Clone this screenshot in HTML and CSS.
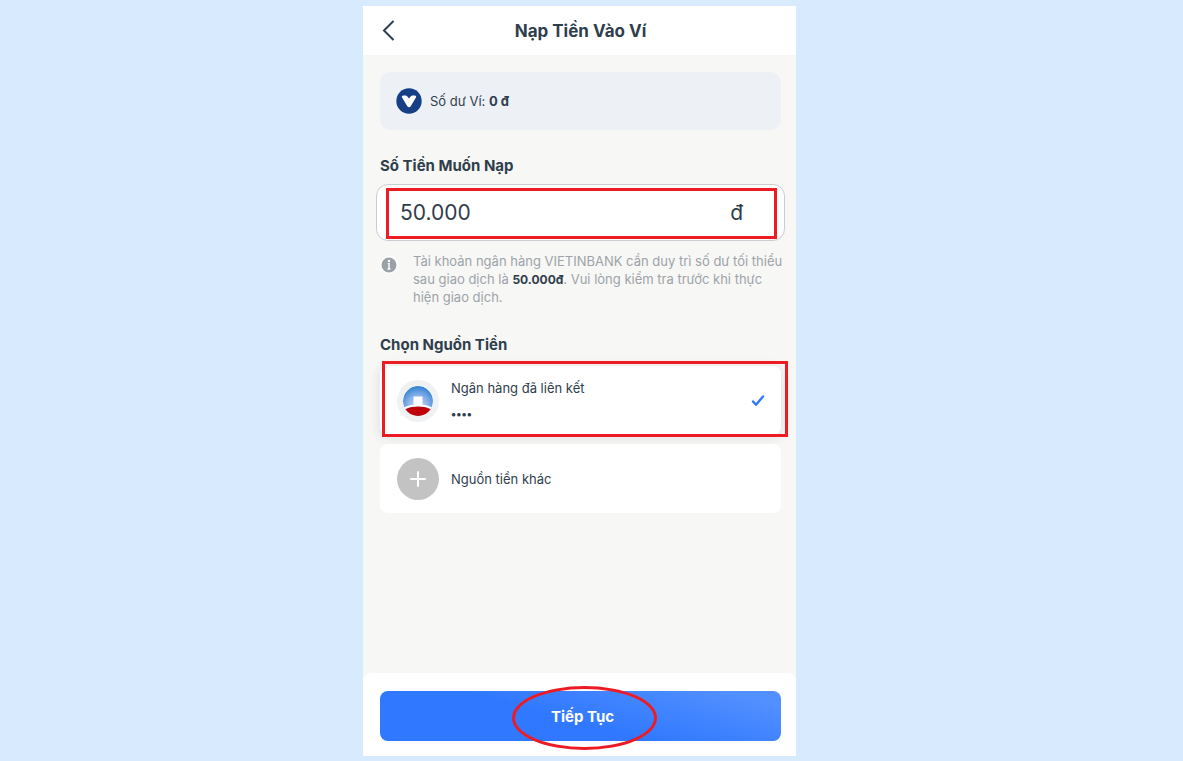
FILE: index.html
```html
<!DOCTYPE html>
<html lang="vi">
<head>
    <meta charset="UTF-8">
    <meta name="viewport" content="width=device-width, initial-scale=1.0">
    <title>Nạp Tiền Vào Ví</title>
    <link rel="stylesheet" href="styles.css">
</head>
<body>
    <form class="screen">
        <header class="header">
            <button type="button" class="back" aria-label="Quay lại">
                <svg width="14" height="22" viewBox="0 0 14 22"><path d="M12.5 1 3 10.5 12.5 20"/></svg>
            </button>
            <h1>Nạp Tiền Vào Ví</h1>
        </header>

        <main class="content">
            <div class="balance">
                <svg width="26" height="26" viewBox="0 0 26 26">
                    <circle cx="13" cy="13" r="12.7" fill="#173f86"/>
                    <path d="M7.4 7.4h2.2c.5 0 .9.2 1.3.6l2.1 2.4 2.1-2.4c.4-.4.8-.6 1.3-.6h2.2c1.4 0 2 1.1 1.3 2.2l-5.2 8.6c-.8 1.3-2.6 1.3-3.4 0L6.1 9.6c-.7-1.1-.1-2.2 1.3-2.2z" fill="#fff"/>
                </svg>
                <p>Số dư Ví: <b>0 đ</b></p>
            </div>

            <label class="section-title" for="amount">Số Tiền Muốn Nạp</label>
            <div class="amount">
                <input type="text" id="amount" inputmode="numeric" value="50.000">
                <span class="currency">đ</span>
                <div class="mark mark-amount"></div>
            </div>
            <div class="note">
                <svg width="18" height="18" viewBox="0 0 18 18">
                    <circle cx="9" cy="9" r="9" fill="#fff"/>
                    <circle cx="9" cy="9" r="7.5" fill="#9aa1a7"/>
                    <circle cx="9" cy="5" r="1.2" fill="#fff"/>
                    <path d="M7.8 7.6H9V13M7.6 13h2.8" fill="none" stroke="#fff" stroke-width="1.4"/>
                </svg>
                <p>Tài khoản ngân hàng VIETINBANK cần duy trì số dư tối thiểu<br>
                sau giao dịch là <b>50.000đ</b>. Vui lòng kiểm tra trước khi thực<br>
                hiện giao dịch.</p>
            </div>

            <fieldset class="sources">
                <legend class="section-title">Chọn Nguồn Tiền</legend>
                <label class="source source-selected" for="linked">
                    <svg width="42" height="42" viewBox="0 0 42 42">
                        <defs>
                            <radialGradient id="sky" cx="50%" cy="65%" r="65%">
                                <stop offset="0" stop-color="#c3d9f5"/>
                                <stop offset="0.5" stop-color="#8bb4ea"/>
                                <stop offset="1" stop-color="#327fd1"/>
                            </radialGradient>
                            <clipPath id="disc"><circle cx="21" cy="21" r="15"/></clipPath>
                        </defs>
                        <circle cx="21" cy="21" r="21" fill="#eff1f2"/>
                        <g clip-path="url(#disc)">
                            <circle cx="21" cy="21" r="15" fill="url(#sky)"/>
                            <path d="M4 31Q21 21.5 38 31V38H4z" fill="#c00008"/>
                            <path d="M4 29.5Q21 21 38 29.5" fill="none" stroke="#fff" stroke-width="2"/>
                            <path d="M16.5 16.5h9V25h-9z" fill="#fff"/>
                        </g>
                    </svg>
                    <span class="source-text">Ngân hàng đã liên kết
                        <span class="digits">••••</span>
                    </span>
                    <input type="radio" name="source" id="linked" checked>
                    <svg class="check" width="14" height="12" viewBox="0 0 14 12"><path d="M2 6.5 5 9.8 12 1.5"/></svg>
                    <span class="mark mark-source"></span>
                </label>
                <label class="source" for="other">
                    <svg width="42" height="42" viewBox="0 0 42 42">
                        <circle cx="21" cy="21" r="21" fill="#c3c3c3"/>
                        <path d="M21 14v14M14 21h14" stroke="#fff" stroke-width="2" stroke-linecap="round"/>
                    </svg>
                    <span class="source-text">Nguồn tiền khác</span>
                    <input type="radio" name="source" id="other">
                </label>
            </fieldset>
        </main>

        <footer class="footer">
            <button type="submit" class="submit">Tiếp Tục</button>
            <div class="mark mark-submit"></div>
        </footer>
    </form>
</body>
</html>
```

FILE: styles.css
```css
* {
    box-sizing: border-box;
}
body {
    margin: 0;
    padding: 6px 24px 5px 0;
    min-height: 100vh;
    display: flex;
    justify-content: center;
    background: #d8eafe;
    font-family: Inter, "Noto Sans", sans-serif;
    font-size: 13px;
    color: #2f3e4c;
}
h1, p {
    margin: 0;
}
svg {
    display: block;
    flex: none;
}
.screen {
    width: 100%;
    max-width: 433px;
    display: flex;
    flex-direction: column;
    background: #f7f7f5;
}

/* header */
.header {
    display: grid;
    grid-template-columns: 48px 1fr 46px;
    align-items: center;
    height: 49px;
    background: #fff;
}
.header h1 {
    font-size: 17px;
    font-weight: 700;
    text-align: center;
}
.back {
    display: flex;
    justify-content: flex-end;
    padding: 0 16px 0 0;
    border: none;
    background: none;
}
.back path {
    fill: none;
    stroke: #2f3e4c;
    stroke-width: 2;
}

.content {
    flex: 1;
    padding: 17px 15px 17px 17px;
}
.balance {
    display: flex;
    align-items: center;
    gap: 8px;
    height: 58px;
    padding: 0 16px;
    border-radius: 10px;
    background: #edf1f6;
}
.section-title {
    display: block;
    padding: 0;
    font-size: 15px;
    font-weight: 700;
    line-height: 20px;
}
label.section-title {
    margin: 26px 0 8px;
}

/* amount */
.amount {
    position: relative;
    display: flex;
    align-items: center;
    height: 57px;
    margin: 0 -4px;
    padding: 0 41px 0 23px;
    border: 1px solid #c9cdd1;
    border-radius: 12px;
    background: #fff;
    font-size: 21px;
}
.amount input {
    flex: 1;
    min-width: 0;
    padding: 0;
    border: none;
    outline: none;
    background: none;
    font: inherit;
    color: inherit;
}
.note {
    display: flex;
    gap: 15px;
    margin-top: 11px;
    line-height: 18px;
    color: #9da3a9;
    white-space: nowrap;
}
.note svg {
    margin-top: 4px;
}
.note b {
    font-size: 12px;
    line-height: 1;
    color: #2f3e4c;
}

/* money sources */
.sources {
    display: flex;
    flex-direction: column;
    gap: 9px;
    margin: 29px 0 0;
    padding: 0;
    border: none;
}
.sources legend {
    margin-bottom: 11px;
}
.source {
    position: relative;
    display: flex;
    align-items: center;
    gap: 12px;
    height: 69px;
    padding: 0 16px 0 17px;
    border-radius: 8px;
    background: #fff;
}
.source-selected {
    box-shadow: 0 2px 12px rgba(40, 50, 70, 0.14);
}
.source-text {
    flex: 1;
}
.source input {
    position: absolute;
    opacity: 0;
}
.digits {
    display: block;
    margin-top: 11px;
    font-size: 11px;
    font-weight: 700;
}
.check path {
    fill: none;
    stroke: #2f78fd;
    stroke-width: 2.4;
    stroke-linecap: round;
    stroke-linejoin: round;
}

/* footer */
.footer {
    position: relative;
    padding: 18px 15px 15px 17px;
    border-radius: 8px 8px 0 0;
    background: #fff;
}
.submit {
    display: block;
    width: 100%;
    height: 50px;
    padding: 0 0 0 4px;
    border: none;
    border-radius: 8px;
    background: linear-gradient(15deg, #2f78ff 45%, #528fff 90%);
    font: 700 15px Inter, "Noto Sans", sans-serif;
    color: #fff;
}

/* red highlights */
.mark {
    position: absolute;
    border: 3px solid #ed1c24;
    pointer-events: none;
}
.mark-amount {
    inset: 3px 7px 1px 9px;
}
.mark-source {
    inset: -5px -7px -2px 2px;
}
.mark-submit {
    inset: 13px 139px 6px 149px;
    border-radius: 50%;
}
```
